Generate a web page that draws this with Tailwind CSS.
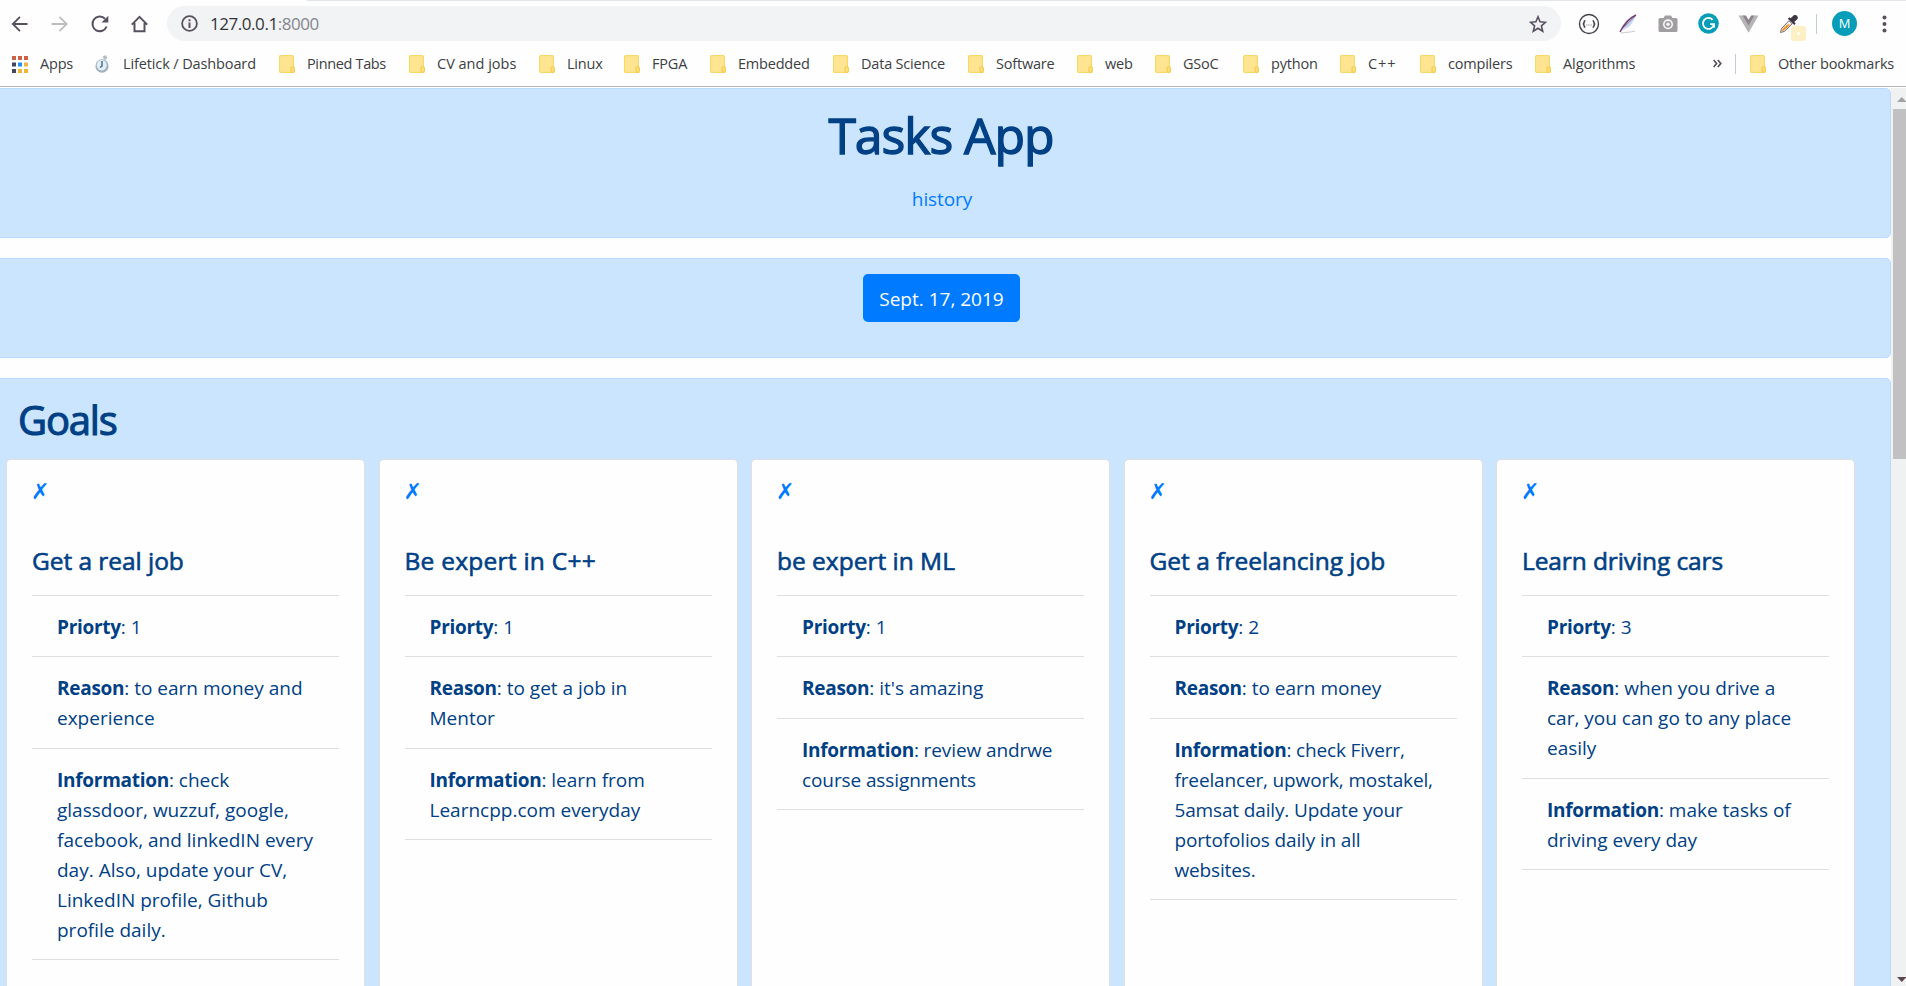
<!DOCTYPE html>
<html lang="en">
<head>
<meta charset="utf-8">
<title>Tasks App</title>
<script src="https://cdn.jsdelivr.net/npm/@tailwindcss/browser@4"></script>
</head>
<body class="h-[986px] w-[1906px] overflow-hidden bg-[#fefefe] font-['Open_Sans','Noto_Sans',sans-serif] text-[#004085]">
<svg class="hidden">
  <symbol id="folder" viewBox="0 0 16 18"><rect x=".6" y=".6" width="13.8" height="16.8" rx="1" fill="#ffe592" stroke="#f7d968" stroke-width="1.2"/><rect x="12" y="11.7" width="3.4" height="5.7" rx="1.4" fill="#ffe07a" stroke="#f3cb4c" stroke-width="1.1"/></symbol>
</svg>
<div class="flex h-full flex-col">
  <header class="h-[87px] shrink-0 border-b border-[#b4b4b4] text-[#3c4043]">
    <div class="ml-[307px] h-px bg-[#e1e5ea]"></div>
    <div class="flex h-[45px] items-center">
      <svg class="ml-[10px] h-5 w-5 shrink-0" viewBox="0 0 20 20" fill="none" stroke="#58505f" stroke-width="1.8"><path d="M17.500 10H3M10 2.800 2.800 10l7.200 7.200"/></svg>
      <svg class="ml-5 h-5 w-5 shrink-0" viewBox="0 0 20 20" fill="none" stroke="#bdbdbf" stroke-width="1.8"><path d="M1.500 10H16M9.500 2.800l7.200 7.200-7.200 7.200"/></svg>
      <svg class="ml-5 h-5 w-5 shrink-0" viewBox="0 0 20 20" fill="none" stroke="#58505f" stroke-width="2"><path d="M16.600 12.500A7.300 7.300 0 1 1 15 4.800"/><path d="M18.300 1.800v6.800h-6.800z" fill="#58505f" stroke="none"/></svg>
      <svg class="ml-5 h-5 w-5 shrink-0" viewBox="0 0 20 20" fill="none" stroke="#58505f" stroke-width="2"><path d="M1.800 10.600 9.500 2.900l7.700 7.700M4.500 9v8.200h10V9" stroke-linejoin="miter"/></svg>
      <div class="ml-[17px] flex h-[35px] w-[1394px] shrink-0 items-center rounded-full bg-[#f1f3f4]">
        <svg class="ml-[14px] h-[17px] w-[17px]" viewBox="0 0 17 17"><circle cx="8.500" cy="8.500" r="7.400" fill="none" stroke="#58505f" stroke-width="1.800"/><path d="M7.500 7.500h2V13h-2zM7.500 4.300h2v2h-2z" fill="#58505f"/></svg>
        <span class="ml-[12px] text-[17px] leading-[22px] tracking-[-0.45px] text-[#33333b]">127.0.0.1<span class="text-[#85858d]">:8000</span></span>
        <svg class="mr-[14px] ml-auto h-[18px] w-[18px]" viewBox="0 0 18 18" fill="none" stroke="#58505f" stroke-width="1.600"><path d="m9 1.800 2.100 5 5.400.5-4.100 3.500 1.300 5.400L9 13.300l-4.700 2.900 1.300-5.400L1.500 7.300l5.400-.5z"/></svg>
      </div>
      <svg class="ml-[17px] h-[22px] w-[22px] shrink-0" viewBox="0 0 22 22" fill="none" stroke="#46404a" stroke-width="1.400"><circle cx="11" cy="11" r="9.500"/><path d="M7.400 7.700c-1.300 0-1.300.5-1.300 1.500s0 1.500-1.200 1.800c1.200.3 1.200.8 1.200 1.800s0 1.500 1.300 1.500M14.600 7.700c1.300 0 1.300.5 1.300 1.500s0 1.500 1.200 1.800c-1.200.3-1.200.8-1.200 1.800s0 1.500-1.300 1.500" stroke-width="1.600"/><path d="M8.300 12h1.200M10.400 12h1.200M12.500 12h1.200" stroke="#888" stroke-width="1.200"/></svg>
      <svg class="ml-[19px] h-5 w-[18px] shrink-0" viewBox="0 0 18 20" fill="none"><path d="M16.500 1C9 3 4 8 2.500 16 10 15 14.500 9 16.500 1z" fill="#ced8ea"/><path d="M17 1C10 4.500 5 10 1 18" stroke="#7b3a68" stroke-width="1.400"/><path d="M16.500 2C12 6 9 10 3.500 14" stroke="#4b5aa5" stroke-width=".7"/><path d="M2 19c5-.8 9-.6 14-2" stroke="#c9c9cf"/></svg>
      <svg class="ml-[21px] h-[18px] w-[20px] shrink-0" viewBox="0 0 20 18"><path d="M2 3h3.500L7 .5h6L14.500 3H18q1.500 0 1.500 1.500v11Q19.500 17 18 17H2Q.5 17 .5 15.500v-11Q.5 3 2 3z" fill="#a19ea1"/><circle cx="10" cy="9.300" r="5" fill="#f8f8f8"/><circle cx="10" cy="9.300" r="3.400" fill="#a19ea1"/><circle cx="10" cy="9.300" r="1.700" fill="#f8f8f8"/></svg>
      <svg class="ml-[20px] h-[21px] w-[21px] shrink-0" viewBox="0 0 21 21"><circle cx="10.500" cy="10.500" r="10.300" fill="#069db8"/><path d="M14.700 6.900a5.500 5.500 0 1 0 1.200 4.300h-3.700M16 10.700v4" fill="none" stroke="#fff" stroke-width="1.800"/></svg>
      <svg class="ml-[19px] h-[18px] w-[21px] shrink-0" viewBox="0 0 21 18"><path d="M.5.500h6L10.500 7l4-6.500h6l-10 17.200z" fill="#b7b4b6"/><path d="M4.700.500h3.200l2.600 4.300L13.100.500h3.200l-5.800 10z" fill="#8d858d"/></svg>
      <div class="relative ml-[20px] h-5 w-5 shrink-0">
        <svg class="h-5 w-5" viewBox="0 0 20 20"><path d="m1.500 18.500 1-4 7.500-7.800 3.200 3.200-7.700 7.500z" fill="#f2eee9" stroke="#7b6b72"/><path d="m2.700 17.300.8-2.500 4.500-4.300h3.500l-6.300 5.900z" fill="#ee9b35"/><path d="m8.800 4.800 6.400 6.300 1.500-1.600-1.400-1.500 3-2.800c1.800-2.300-1.300-5.600-3.800-3.800l-2.800 2.800-1.300-1z" fill="#403744"/></svg>
        <div class="absolute top-[12px] left-[12px] flex h-[15px] w-[15px] items-center justify-center rounded-[3px] bg-[#fdf0c4]"><div class="h-[3px] w-[3px] rounded-full bg-white"></div></div>
      </div>
      <div class="ml-[17px] h-5 w-px shrink-0 bg-[#c3ccd2]"></div>
      <div class="ml-[15px] flex h-[25px] w-[25px] shrink-0 items-center justify-center rounded-full bg-[#069db8] text-[13px] text-white">M</div>
      <svg class="ml-[25px] h-5 w-[5px] shrink-0" viewBox="0 0 5 20" fill="#58505f"><circle cx="2.500" cy="3.500" r="2"/><circle cx="2.500" cy="10" r="2"/><circle cx="2.500" cy="16.500" r="2"/></svg>
    </div>
    <nav class="flex h-[36px] items-center text-[14.5px] leading-5 tracking-[-0.2px] whitespace-nowrap">
      <div class="flex w-[95px] shrink-0 items-center pl-[12px]">
        <svg class="mr-[12px] h-[17px] w-4" viewBox="0 0 16 17"><path d="M0 0h4v4H0zM6 0h4v4H6zM12 0h4v4h-4z" fill="#cb6243"/><path d="M0 6.500h4v4H0zM0 13h4v4H0z" fill="#44465e"/><path d="M6 6.500h4v4H6z" fill="#2091f5"/><path d="M12 6.500h4v4h-4zM12 13h4v4h-4zM6 13h4v4H6z" fill="#efb63e"/></svg><span>Apps</span>
      </div>
      <div class="flex w-[184px] shrink-0 items-center">
        <svg class="mr-[13px] h-[18px] w-[15px]" viewBox="0 0 15 18"><path d="m8 1 3-.8 1.200 2.200L11 5 8.500 4z" fill="#b4bcc4"/><ellipse cx="7" cy="11" rx="6.600" ry="6.800" fill="#9fb0bf"/><ellipse cx="6.700" cy="10.300" rx="5" ry="5.300" fill="#e4eef6"/><path d="M7 6v5l-2 1.500" fill="none" stroke="#4a7190" stroke-width="1.500"/></svg><span class="tracking-[-0.12px]">Lifetick / Dashboard</span>
      </div>
      <div class="flex w-[130px] shrink-0 items-center gap-3"><svg class="h-[18px] w-4"><use href="#folder"/></svg><span class="tracking-[-0.35px]">Pinned Tabs</span></div>
      <div class="flex w-[130px] shrink-0 items-center gap-3"><svg class="h-[18px] w-4"><use href="#folder"/></svg><span class="tracking-[0px]">CV and jobs</span></div>
      <div class="flex w-[85px] shrink-0 items-center gap-3"><svg class="h-[18px] w-4"><use href="#folder"/></svg><span>Linux</span></div>
      <div class="flex w-[86px] shrink-0 items-center gap-3"><svg class="h-[18px] w-4"><use href="#folder"/></svg><span>FPGA</span></div>
      <div class="flex w-[123px] shrink-0 items-center gap-3"><svg class="h-[18px] w-4"><use href="#folder"/></svg><span>Embedded</span></div>
      <div class="flex w-[135px] shrink-0 items-center gap-3"><svg class="h-[18px] w-4"><use href="#folder"/></svg><span>Data Science</span></div>
      <div class="flex w-[109px] shrink-0 items-center gap-3"><svg class="h-[18px] w-4"><use href="#folder"/></svg><span>Software</span></div>
      <div class="flex w-[78px] shrink-0 items-center gap-3"><svg class="h-[18px] w-4"><use href="#folder"/></svg><span>web</span></div>
      <div class="flex w-[88px] shrink-0 items-center gap-3"><svg class="h-[18px] w-4"><use href="#folder"/></svg><span>GSoC</span></div>
      <div class="flex w-[97px] shrink-0 items-center gap-3"><svg class="h-[18px] w-4"><use href="#folder"/></svg><span>python</span></div>
      <div class="flex w-[80px] shrink-0 items-center gap-3"><svg class="h-[18px] w-4"><use href="#folder"/></svg><span class="tracking-[0.9px]">C++</span></div>
      <div class="flex w-[115px] shrink-0 items-center gap-3"><svg class="h-[18px] w-4"><use href="#folder"/></svg><span>compilers</span></div>
      <div class="flex w-[178px] shrink-0 items-center gap-3"><svg class="h-[18px] w-4"><use href="#folder"/></svg><span class="tracking-[-0.1px]">Algorithms</span></div>
      <svg class="h-[10px] w-[9px] shrink-0" viewBox="0 0 9 10" fill="none" stroke="#58505f" stroke-width="1.700"><path d="m.6 1 3 3.500-3 3.500M4.800 1l3 3.500-3 3.500"/></svg>
      <div class="ml-[13px] h-5 w-px shrink-0 bg-[#c3ccd2]"></div>
      <div class="ml-[14px] flex shrink-0 items-center gap-3"><svg class="h-[18px] w-4"><use href="#folder"/></svg><span>Other bookmarks</span></div>
    </nav>
  </header>

  <div class="flex min-h-0 flex-1 pt-px">
    <main class="-ml-[9px] w-[1900px] shrink-0 overflow-hidden">
      <section class="h-[150px] rounded-[5px] border border-[#b8daff] bg-[#cce5ff] pt-[16px] text-center">
        <h1 class="text-[50px] leading-[60px] tracking-[-1.1px] [-webkit-text-stroke:1.3px_#004085]">Tasks App</h1>
        <a class="mt-[19px] block pl-[2px] text-[19px] leading-[30px] tracking-[-0.1px] text-[#007bff]">history</a>
      </section>
      <section class="mt-5 h-[100px] rounded-[5px] border border-[#b8daff] bg-[#cce5ff] pt-[15px]">
        <div class="mx-auto flex h-12 w-[157px] items-center justify-center rounded-[5px] bg-[#007bff] pt-[2px] pl-px text-[19px] whitespace-nowrap text-white">Sept. 17, 2019</div>
      </section>
      <section class="mt-5 h-[700px] rounded-[5px] border border-[#b8daff] bg-[#cce5ff] pt-[16px] pl-[14px]">
        <h2 class="ml-[12px] pt-px text-[40px] leading-[48px] tracking-[-1.2px] [-webkit-text-stroke:1.1px_#004085]">Goals</h2>
        <div class="mt-[15px] flex gap-[13.500px] text-[19px] leading-[30px] whitespace-nowrap">
          <article class="h-[600px] w-[359px] shrink-0 rounded-[5px] border border-black/12 bg-[#fefefe] px-[25px] pt-[17px]">
            <a class="-ml-px block h-[30px] font-['DejaVu_Sans'] text-[22px] text-[#007bff]">✗</a>
            <h5 class="mt-[39px] h-[30px] text-[24.5px] tracking-[-0.05px] [-webkit-text-stroke:0.6px_#004085]">Get a real job</h5>
            <ul class="mt-[19px] border-t border-[#dfdfdf]">
              <li class="border-b border-[#dfdfdf] px-[25px] pt-[16.125px] pb-[14.125px]"><b class="tracking-[-0.28px]">Priorty</b>: 1</li>
              <li class="border-b border-[#dfdfdf] px-[25px] pt-[16.125px] pb-[14.125px]"><b class="tracking-[-0.28px]">Reason</b>: to earn money and<br>experience</li>
              <li class="border-b border-[#dfdfdf] px-[25px] pt-[16.125px] pb-[14.125px]"><b class="tracking-[-0.28px]">Information</b>: check<br>glassdoor, wuzzuf, google,<br>facebook, and linkedIN every<br>day. Also, update your CV,<br>LinkedIN profile, Github<br>profile daily.</li>
            </ul>
          </article>
          <article class="h-[600px] w-[359px] shrink-0 rounded-[5px] border border-black/12 bg-[#fefefe] px-[25px] pt-[17px]">
            <a class="-ml-px block h-[30px] font-['DejaVu_Sans'] text-[22px] text-[#007bff]">✗</a>
            <h5 class="mt-[39px] h-[30px] text-[24.5px] tracking-[0.25px] [-webkit-text-stroke:0.6px_#004085]">Be expert in C++</h5>
            <ul class="mt-[19px] border-t border-[#dfdfdf]">
              <li class="border-b border-[#dfdfdf] px-[25px] pt-[16.125px] pb-[14.125px]"><b class="tracking-[-0.28px]">Priorty</b>: 1</li>
              <li class="border-b border-[#dfdfdf] px-[25px] pt-[16.125px] pb-[14.125px]"><b class="tracking-[-0.28px]">Reason</b>: to get a job in<br>Mentor</li>
              <li class="border-b border-[#dfdfdf] px-[25px] pt-[16.125px] pb-[14.125px]"><b class="tracking-[-0.28px]">Information</b>: learn from<br>Learncpp.com everyday</li>
            </ul>
          </article>
          <article class="h-[600px] w-[359px] shrink-0 rounded-[5px] border border-black/12 bg-[#fefefe] px-[25px] pt-[17px]">
            <a class="-ml-px block h-[30px] font-['DejaVu_Sans'] text-[22px] text-[#007bff]">✗</a>
            <h5 class="mt-[39px] h-[30px] text-[24.5px] [-webkit-text-stroke:0.6px_#004085]">be expert in ML</h5>
            <ul class="mt-[19px] border-t border-[#dfdfdf]">
              <li class="border-b border-[#dfdfdf] px-[25px] pt-[16.125px] pb-[14.125px]"><b class="tracking-[-0.28px]">Priorty</b>: 1</li>
              <li class="border-b border-[#dfdfdf] px-[25px] pt-[16.125px] pb-[14.125px]"><b class="tracking-[-0.28px]">Reason</b>: it's amazing</li>
              <li class="border-b border-[#dfdfdf] px-[25px] pt-[16.125px] pb-[14.125px] tracking-[-0.1px]"><b class="tracking-[-0.28px]">Information</b>: review andrwe<br>course assignments</li>
            </ul>
          </article>
          <article class="h-[600px] w-[359px] shrink-0 rounded-[5px] border border-black/12 bg-[#fefefe] px-[25px] pt-[17px]">
            <a class="-ml-px block h-[30px] font-['DejaVu_Sans'] text-[22px] text-[#007bff]">✗</a>
            <h5 class="mt-[39px] h-[30px] text-[24.5px] [-webkit-text-stroke:0.6px_#004085]">Get a freelancing job</h5>
            <ul class="mt-[19px] border-t border-[#dfdfdf]">
              <li class="border-b border-[#dfdfdf] px-[25px] pt-[16.125px] pb-[14.125px]"><b class="tracking-[-0.28px]">Priorty</b>: 2</li>
              <li class="border-b border-[#dfdfdf] px-[25px] pt-[16.125px] pb-[14.125px]"><b class="tracking-[-0.28px]">Reason</b>: to earn money</li>
              <li class="border-b border-[#dfdfdf] px-[25px] pt-[16.125px] pb-[14.125px] tracking-[-0.15px]"><b class="tracking-[-0.28px]">Information</b>: check Fiverr,<br>freelancer, upwork, mostakel,<br>5amsat daily. Update your<br>portofolios daily in all<br>websites.</li>
            </ul>
          </article>
          <article class="h-[600px] w-[359px] shrink-0 rounded-[5px] border border-black/12 bg-[#fefefe] px-[25px] pt-[17px]">
            <a class="-ml-px block h-[30px] font-['DejaVu_Sans'] text-[22px] text-[#007bff]">✗</a>
            <h5 class="mt-[39px] h-[30px] text-[24.5px] tracking-[-0.1px] [-webkit-text-stroke:0.6px_#004085]">Learn driving cars</h5>
            <ul class="mt-[19px] border-t border-[#dfdfdf]">
              <li class="border-b border-[#dfdfdf] px-[25px] pt-[16.125px] pb-[14.125px]"><b class="tracking-[-0.28px]">Priorty</b>: 3</li>
              <li class="border-b border-[#dfdfdf] px-[25px] pt-[16.125px] pb-[14.125px]"><b class="tracking-[-0.28px]">Reason</b>: when you drive a<br>car, you can go to any place<br>easily</li>
              <li class="border-b border-[#dfdfdf] px-[25px] pt-[16.125px] pb-[14.125px]"><b class="tracking-[-0.28px]">Information</b>: make tasks of<br>driving every day</li>
            </ul>
          </article>
        </div>
      </section>
    </main>
    <aside class="flex w-[15px] shrink-0 flex-col bg-[#f0f1f1] pl-[2px]">
      <svg class="h-[21px] w-[13px]" viewBox="0 0 13 21"><path d="M4 14h9.500L8.800 9z" fill="#a3a3a3"/></svg>
      <div class="h-[350px] bg-[#c1c1c1]"></div>
      <svg class="mt-auto h-[20px] w-[13px]" viewBox="0 0 13 20"><path d="M4 11h9.500l-4.700 5z" fill="#5d4751"/></svg>
    </aside>
  </div>
</div>
</body>
</html>
